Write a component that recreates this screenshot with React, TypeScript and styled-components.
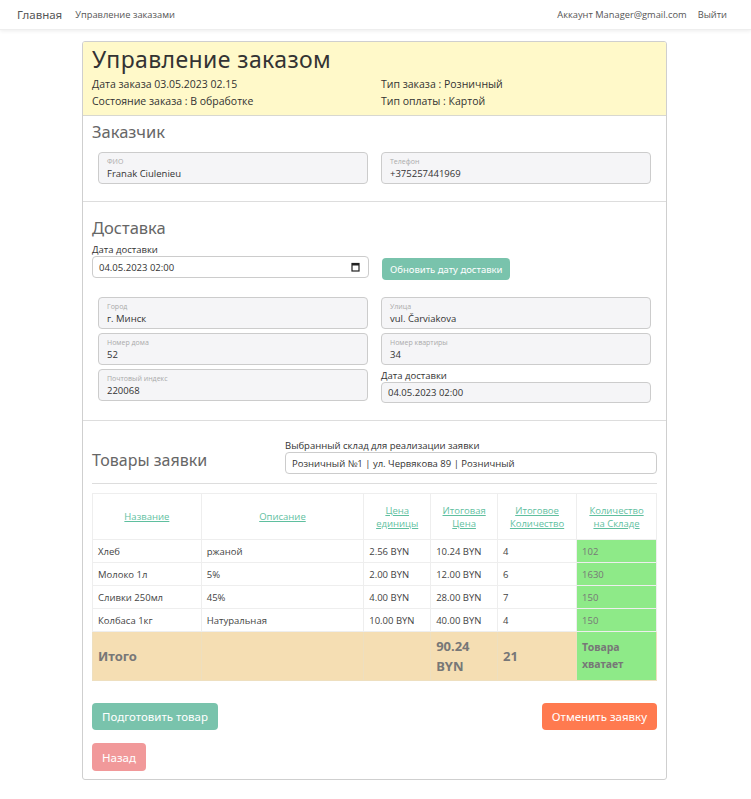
import React from "react";
import styled, { createGlobalStyle } from "styled-components";

const Global = createGlobalStyle`
  html, body { margin: 0; padding: 0; background: #fff; }
  body { font-family: "Open Sans", "Noto Sans", sans-serif; color: #333; }
  * { box-sizing: border-box; }
`;

const Nav = styled.nav`
  height: 30px;
  display: flex;
  align-items: center;
  padding: 0 24px 0 17px;
  background: #fff;
  box-shadow: 0 1px 4px rgba(0,0,0,0.08);
  border-bottom: 1px solid #eee;
`;
const Brand = styled.a`
  font-family: "Noto Sans", sans-serif;
  font-size: 11.5px;
  color: #555;
  margin-right: 13px;
`;
const NavLink = styled.a<{ $ml?: number }>`
  font-size: 9.3px;
  color: #555;
  margin-left: ${p => p.$ml ?? 0}px;
`;
const Spacer = styled.div` flex: 1; `;

const Card = styled.div`
  margin: 11px 84px 20px 82px;
  border: 1px solid #cfcfcf;
  border-radius: 3px;
  overflow: hidden;
`;
const Header = styled.div`
  background: #fff9c9;
  padding: 2px 9px 5px;
  border-bottom: 1px solid #d8d8d0;
`;
const Title = styled.h1`
  margin: 0 0 2px;
  font-family: "Noto Sans", sans-serif;
  font-weight: 400;
  font-size: 23px;
  letter-spacing: 0.4px;
  color: #333;
  line-height: 30px;
`;
const InfoGrid = styled.div`
  display: grid;
  grid-template-columns: 289px 1fr;
  font-size: 10.5px;
  line-height: 17px;
  color: #333;
`;

const Section = styled.div<{ $pt?: number; $pb?: number }>`
  padding: ${p => p.$pt ?? 6}px 9px ${p => p.$pb ?? 16}px;
  border-bottom: 1px solid #ddd;
`;
const H2 = styled.h2<{ $mb?: number }>`
  margin: 0 0 ${p => p.$mb ?? 0}px;
  font-family: "Noto Sans", sans-serif;
  font-weight: 400;
  font-size: 16.5px;
  color: #666;
  line-height: 22px;
`;
const TwoCol = styled.div<{ $gap?: number }>`
  display: grid;
  grid-template-columns: 1fr 1fr;
  column-gap: 13px;
  row-gap: ${p => p.$gap ?? 4}px;
  padding: 0 6px;
`;
const Floating = styled.div`
  height: 32px;
  border: 1px solid #ccc;
  border-radius: 4px;
  background: #f5f5f7;
  padding: 4px 8px 0;
  display: flex;
  flex-direction: column;
`;
const FLabel = styled.span`
  font-size: 7px;
  color: #aaa;
  line-height: 10px;
`;
const FValue = styled.span`
  font-size: 9.5px;
  color: #333;
  line-height: 13px;
`;
const Small = styled.div`
  font-size: 9.5px;
  color: #333;
  line-height: 13px;
`;
const DateInput = styled.div<{ $ro?: boolean }>`
  height: ${p => (p.$ro ? 21 : 22)}px;
  border: 1px solid #ccc;
  border-radius: 4px;
  background: ${p => (p.$ro ? "#f5f5f7" : "#fff")};
  display: flex;
  align-items: center;
  justify-content: space-between;
  padding: 0 8px 0 6px;
  font-size: 9.5px;
  color: #333;
`;
const Btn = styled.button<{ $bg: string; $h?: number; $fs?: number; $px?: number }>`
  background: ${p => p.$bg};
  color: #fff;
  border: none;
  border-radius: 4px;
  height: ${p => p.$h ?? 27}px;
  padding: 0 ${p => p.$px ?? 10}px;
  font-family: "Noto Sans", sans-serif;
  font-size: ${p => p.$fs ?? 11.5}px;
  cursor: pointer;
  white-space: nowrap;
`;
const DeliveryTop = styled.div`
  display: grid;
  grid-template-columns: 277px 1fr;
  column-gap: 13px;
  align-items: end;
  margin-bottom: 19px;
`;
const BtnCell = styled.div`
  transform: translateY(2px);
`;
const RightStack = styled.div`
  display: flex;
  flex-direction: column;
  justify-content: flex-end;
  padding-bottom: 2px;
`;

const GoodsSection = styled.div`
  padding: 18px 9px 0 9px;
`;
const GoodsHead = styled.div`
  display: grid;
  grid-template-columns: 193px 1fr;
  align-items: end;
  padding-bottom: 9px;
  border-bottom: 1px solid #ddd;
  margin-bottom: 9px;
`;
const Select = styled.div`
  height: 22px;
  border: 1px solid #ccc;
  border-radius: 4px;
  display: flex;
  align-items: center;
  padding: 0 6px;
  font-size: 9.5px;
  color: #333;
`;

const Table = styled.table`
  width: 100%;
  border-collapse: collapse;
  font-size: 9.5px;
  color: #444;
`;
const Th = styled.th<{ $w: number }>`
  width: ${p => p.$w}px;
  border: 1px solid #eee;
  height: 46px;
  font-weight: 400;
  text-align: center;
  vertical-align: middle;
  padding: 0 6px;
  line-height: 13px;
`;
const ThLink = styled.a`
  color: #5fbf9f;
  text-decoration: underline;
  text-decoration-color: #5fbf9f;
`;
const Td = styled.td<{ $green?: boolean }>`
  border: 1px solid #eee;
  height: 23px;
  padding: 0 5px;
  background: ${p => (p.$green ? "#8eea88" : "transparent")};
  color: ${p => (p.$green ? "#777" : "#444")};
`;
const TotalTd = styled.td<{ $green?: boolean }>`
  background: ${p => (p.$green ? "#8eea88" : "#f5deb3")};
  border: 1px solid #eedfbf;
  height: 49px;
  padding: 0 5px;
  font-family: "Noto Sans", sans-serif;
  font-weight: 700;
  font-size: ${p => (p.$green ? 10.5 : 13)}px;
  line-height: ${p => (p.$green ? 17 : 20)}px;
  color: #777;
`;
const Actions = styled.div`
  padding: 22px 9px 8px;
  display: flex;
  flex-direction: column;
  gap: 13px;
`;
const ActionRow = styled.div`
  display: flex;
  justify-content: space-between;
`;

const CalIcon = () => (
  <svg width="9" height="10" viewBox="0 0 9 10">
    <rect x="1" y="1.5" width="7" height="7.5" fill="none" stroke="#222" strokeWidth="1.2" />
    <rect x="1" y="1.5" width="7" height="2" fill="#222" />
  </svg>
);

const rows = [
  ["Хлеб", "ржаной", "2.56 BYN", "10.24 BYN", "4", "102"],
  ["Молоко 1л", "5%", "2.00 BYN", "12.00 BYN", "6", "1630"],
  ["Сливки 250мл", "45%", "4.00 BYN", "28.00 BYN", "7", "150"],
  ["Колбаса 1кг", "Натуральная", "10.00 BYN", "40.00 BYN", "4", "150"],
];

export default function App() {
  return (
    <>
      <Global />
      <Nav>
        <Brand>Главная</Brand>
        <NavLink>Управление заказами</NavLink>
        <Spacer />
        <NavLink>Аккаунт Manager@gmail.com</NavLink>
        <NavLink $ml={11}>Выйти</NavLink>
      </Nav>
      <Card>
        <Header>
          <Title>Управление заказом</Title>
          <InfoGrid>
            <span>Дата заказа 03.05.2023 02.15</span>
            <span>Тип заказа : Розничный</span>
            <span>Состояние заказа : В обработке</span>
            <span>Тип оплаты : Картой</span>
          </InfoGrid>
        </Header>
        <Section $pt={5} $pb={17}>
          <H2 $mb={9}>Заказчик</H2>
          <TwoCol>
            <Floating><FLabel>ФИО</FLabel><FValue>Franak Ciulenieu</FValue></Floating>
            <Floating><FLabel>Телефон</FLabel><FValue>+375257441969</FValue></Floating>
          </TwoCol>
        </Section>
        <Section $pt={15} $pb={15}>
          <H2 $mb={4}>Доставка</H2>
          <DeliveryTop>
            <div>
              <Small>Дата доставки</Small>
              <DateInput>04.05.2023 02:00<CalIcon /></DateInput>
            </div>
            <BtnCell>
              <Btn $bg="#79c3ac" $h={22} $fs={9.5} $px={8}>Обновить дату доставки</Btn>
            </BtnCell>
          </DeliveryTop>
          <TwoCol>
            <Floating><FLabel>Город</FLabel><FValue>г. Минск</FValue></Floating>
            <Floating><FLabel>Улица</FLabel><FValue>vul. Čarviakova</FValue></Floating>
            <Floating><FLabel>Номер дома</FLabel><FValue>52</FValue></Floating>
            <Floating><FLabel>Номер квартиры</FLabel><FValue>34</FValue></Floating>
            <Floating><FLabel>Почтовый индекс</FLabel><FValue>220068</FValue></Floating>
            <RightStack>
              <Small>Дата доставки</Small>
              <DateInput $ro>04.05.2023 02:00</DateInput>
            </RightStack>
          </TwoCol>
        </Section>
        <GoodsSection>
          <GoodsHead>
            <H2 style={{ fontSize: 16, paddingBottom: 3 }}>Товары заявки</H2>
            <div>
              <Small>Выбранный склад для реализации заявки</Small>
              <Select>Розничный №1 | ул. Червякова 89 | Розничный</Select>
            </div>
          </GoodsHead>
          <Table>
            <thead>
              <tr>
                <Th $w={109}><ThLink>Название</ThLink></Th>
                <Th $w={163}><ThLink>Описание</ThLink></Th>
                <Th $w={67}><ThLink>Цена единицы</ThLink></Th>
                <Th $w={67}><ThLink>Итоговая Цена</ThLink></Th>
                <Th $w={79}><ThLink>Итоговое Количество</ThLink></Th>
                <Th $w={80}><ThLink>Количество на Складе</ThLink></Th>
              </tr>
            </thead>
            <tbody>
              {rows.map(r => (
                <tr key={r[0]}>
                  {r.map((c, i) => (
                    <Td key={i} $green={i === 5}>{c}</Td>
                  ))}
                </tr>
              ))}
              <tr>
                <TotalTd>Итого</TotalTd>
                <TotalTd />
                <TotalTd />
                <TotalTd>90.24 BYN</TotalTd>
                <TotalTd>21</TotalTd>
                <TotalTd $green>Товара хватает</TotalTd>
              </tr>
            </tbody>
          </Table>
        </GoodsSection>
        <Actions>
          <ActionRow>
            <Btn $bg="#79c3ac">Подготовить товар</Btn>
            <Btn $bg="#ff7a4f">Отменить заявку</Btn>
          </ActionRow>
          <ActionRow>
            <Btn $bg="#f1999a" $h={28}>Назад</Btn>
          </ActionRow>
        </Actions>
      </Card>
    </>
  );
}
